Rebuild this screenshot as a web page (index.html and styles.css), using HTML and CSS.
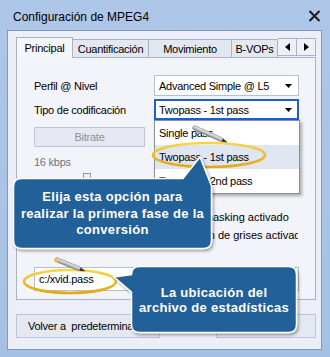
FILE: index.html
```html
<!DOCTYPE html>
<html lang="es">
<head>
<meta charset="utf-8">
<title>Configuración de MPEG4</title>
<link rel="stylesheet" href="styles.css">
</head>
<body>
<div class="window">
  <div class="titlebar">
    <span class="title">Configuración de MPEG4</span>
    <svg class="close" width="13" height="12" viewBox="0 0 13 12"><path d="M1.5 1L11.5 11M11.5 1L1.5 11" stroke="#1b1b1b" stroke-width="2"/></svg>
  </div>
  <div class="client">
    <div class="tabs">
      <div class="tab active">Principal</div>
      <div class="tab t-cuant">Cuantificación</div>
      <div class="tab t-mov">Movimiento</div>
      <div class="tab t-bvop">B-VOPs</div>
      <div class="scroll-btn"><svg width="5" height="8" viewBox="0 0 5 8"><path d="M5 0V8L0 4Z" fill="#000"/></svg></div>
      <div class="scroll-btn"><svg width="5" height="8" viewBox="0 0 5 8"><path d="M0 0V8L5 4Z" fill="#000"/></svg></div>
    </div>
    <div class="page">
      <div class="field-row">
        <span class="label">Perfil @ Nivel</span>
        <div class="combo"><span>Advanced Simple @ L5</span><svg class="arrow" width="7" height="4" viewBox="0 0 7 4"><path d="M0 0H7L3.5 4Z" fill="#000"/></svg></div>
      </div>
      <div class="field-row second">
        <span class="label">Tipo de codificación</span>
        <div class="combo focused"><span>Twopass - 1st pass</span><svg class="arrow" width="7" height="4" viewBox="0 0 7 4"><path d="M0 0H7L3.5 4Z" fill="#000"/></svg>
          <ul class="dropdown">
            <li>Single pass</li>
            <li class="selected">Twopass - 1st pass</li>
            <li>Twopass - 2nd pass</li>
          </ul>
        </div>
      </div>
      <div class="btn disabled bitrate">Bitrate</div>
      <div class="kbps">16 kbps</div>
      <div class="slider"><span class="thumb"></span></div>
      <div class="checks">
        <div class="check"><span class="box"></span><span>Lumimasking activado</span></div>
        <div class="check"><span class="box"></span><span>Opción de grises activado</span></div>
      </div>
      <div class="textbox">c:/xvid.pass</div>
    </div>
    <div class="buttons">
      <div class="btn reset">Volver a&nbsp; predeterminado</div>
      <div class="btn ok">Aceptar</div>
    </div>
  </div>

  <svg class="annotations" width="330" height="357" viewBox="0 0 330 357">
    <defs>
      <linearGradient id="gold" x1="0" y1="0" x2="0" y2="1">
        <stop offset="0" stop-color="#f8d44a"/>
        <stop offset="1" stop-color="#e2a90c"/>
      </linearGradient>
      <linearGradient id="pen" x1="0" y1="0" x2="0" y2="1">
        <stop offset="0" stop-color="#f4f4f4"/>
        <stop offset="0.5" stop-color="#c9c9c9"/>
        <stop offset="1" stop-color="#8d8d8d"/>
      </linearGradient>
      <filter id="shadow" x="-10%" y="-10%" width="125%" height="130%">
        <feDropShadow dx="1.5" dy="2" stdDeviation="1.5" flood-color="#000" flood-opacity="0.35"/>
      </filter>
    </defs>
    <ellipse cx="209" cy="155" rx="56" ry="12" fill="none" stroke="url(#gold)" stroke-width="2.6"/>
    <g transform="translate(193 127) rotate(24)">
      <rect x="0" y="-2" width="32" height="4" rx="1.5" fill="url(#pen)" stroke="#7a7a7a" stroke-width="0.6"/>
      <path d="M32 -2L38 0L32 2Z" fill="#3a3a3a"/>
    </g>
    <ellipse cx="70" cy="281.5" rx="46" ry="11.5" fill="none" stroke="url(#gold)" stroke-width="2.6"/>
    <g transform="translate(55 259) rotate(22)">
      <rect x="0" y="-2" width="27" height="4" rx="1.5" fill="url(#pen)" stroke="#7a7a7a" stroke-width="0.6"/>
      <rect x="0" y="-2" width="4" height="4" fill="#e8c44a"/>
      <path d="M27 -2L33 0L27 2Z" fill="#3a3a3a"/>
    </g>
    <path filter="url(#shadow)" d="M21.5 178.5H183L200 157L211.5 186V240.5Q211.5 248.5 203.5 248.5H21.5Q13.5 248.5 13.5 240.5V186.5Q13.5 178.5 21.5 178.5Z" fill="#23609a" stroke="#fff" stroke-width="1.5"/>
    <path filter="url(#shadow)" d="M139.5 266.5H288.5Q296.5 266.5 296.5 274.5V324.5Q296.5 332.5 288.5 332.5H139.5Q131.5 332.5 131.5 324.5V292L114 277L131.5 274.5Q131.5 266.5 139.5 266.5Z" fill="#23609a" stroke="#fff" stroke-width="1.5"/>
  </svg>

  <div class="callout-text c1">Elija esta opción para<br>realizar la primera fase de la<br>conversión</div>
  <div class="callout-text c2">La ubicación del<br>archivo de estadísticas</div>
</div>
</body>
</html>
```

FILE: styles.css
```css
html, body {
  margin: 0;
  padding: 0;
}
body {
  font-family: "Liberation Sans", Arial, sans-serif;
  font-size: 11px;
  letter-spacing: -0.25px;
  color: #000;
  background: #a9c3e6;
}
.window {
  position: relative;
  width: 330px;
  height: 357px;
  background: linear-gradient(#aec7e8, #a6c0e4);
  overflow: hidden;
}
.titlebar {
  height: 30px;
  box-sizing: border-box;
  padding: 3px 9px 0 13px;
  display: flex;
  align-items: center;
  justify-content: space-between;
}
.title {
  font-size: 12px;
  letter-spacing: 0;
}
.close {
  display: block;
  margin-top: -1px;
}
.client {
  margin: 0 8px 0 7px;
  height: 320px;
  box-sizing: border-box;
  border: 1px solid #7d99c6;
  background: #eceff7;
  padding: 6px 5px 0 8px;
}
.tabs {
  display: flex;
  align-items: flex-end;
  height: 20px;
}
.tab {
  box-sizing: border-box;
  height: 18px;
  border: 1px solid #a9b3c5;
  border-left: none;
  border-bottom: none;
  background: #e3e7ef;
  display: flex;
  align-items: center;
  justify-content: center;
  padding-top: 1px;
}
.tab.active {
  position: relative;
  z-index: 1;
  width: 57px;
  height: 21px;
  margin-bottom: -1px;
  border-left: 1px solid #a9b3c5;
  background: #f5f6fa;
  padding-bottom: 2px;
}
.t-cuant { width: 76px; }
.t-mov { width: 83px; }
.t-bvop { width: 46px; }
.scroll-btn {
  box-sizing: border-box;
  width: 19px;
  height: 18px;
  margin-bottom: 1px;
  border: 1px solid #a9b3c5;
  border-left: none;
  background: #eef0f6;
  display: flex;
  align-items: center;
  justify-content: center;
}
.scroll-btn:first-of-type { border-left: 1px solid #a9b3c5; }
.page {
  box-sizing: border-box;
  width: 300px;
  height: 243px;
  border: 1px solid #a9b3c5;
  background: #f2f4f9;
  padding: 17px 16px 0 17px;
}
.field-row {
  display: flex;
  align-items: center;
  justify-content: space-between;
  height: 21px;
}
.field-row.second { margin-top: 3px; }
.combo {
  position: relative;
  box-sizing: border-box;
  width: 145px;
  height: 21px;
  border: 1px solid #b5bfcf;
  background: #fff;
  display: flex;
  align-items: center;
  justify-content: space-between;
  padding: 0 6px 0 4px;
}
.combo.focused {
  border: 2px solid #1c5ed6;
  padding: 0 5px 0 3px;
}
.arrow { display: block; }
.dropdown {
  position: absolute;
  left: -2px;
  top: 100%;
  margin: 2px 0 0;
  padding: 0;
  list-style: none;
  width: 146px;
  box-sizing: border-box;
  border: 1px solid #8a8f98;
  background: #fff;
  box-shadow: 2px 2px 3px rgba(0, 0, 0, 0.3);
  z-index: 2;
}
.dropdown li {
  height: 24px;
  line-height: 24px;
  padding-left: 4px;
}
.dropdown li.selected { background: #dfe5f1; }
.btn {
  box-sizing: border-box;
  height: 24px;
  border: 1px solid #bcc5d4;
  background: #e4e8f1;
  display: flex;
  align-items: center;
}
.bitrate {
  width: 111px;
  height: 20px;
  margin-top: 7px;
  justify-content: center;
  color: #8a919c;
  background: #e6e9f1;
}
.kbps {
  margin-top: 8px;
  line-height: 14px;
  color: #6c7584;
}
.slider {
  margin-top: 4px;
  height: 10px;
  padding-left: 49px;
}
.thumb {
  display: block;
  width: 6px;
  height: 9px;
  border: 1px solid #8e9aab;
  background: #eef0f5;
}
.checks {
  margin: 27px 0 0 128px;
  width: 136px;
  overflow: hidden;
  white-space: nowrap;
  display: flex;
  flex-direction: column;
  gap: 4px;
  letter-spacing: 0;
}
.check {
  display: flex;
  align-items: center;
  gap: 5px;
  line-height: 14px;
}
.check .box {
  flex: none;
  width: 11px;
  height: 11px;
  border: 1px solid #8e9aab;
  background: #fff;
}
.textbox {
  margin-top: 25px;
  box-sizing: border-box;
  height: 24px;
  border: 1px solid #b5bfcf;
  background: #fff;
  display: flex;
  align-items: center;
  padding-left: 4px;
}
.buttons {
  margin-top: 14px;
  width: 300px;
  display: flex;
  justify-content: space-between;
}
.reset {
  width: 144px;
  padding-left: 11px;
}
.ok {
  width: 100px;
  justify-content: center;
}
.annotations {
  position: absolute;
  left: 0;
  top: 0;
  z-index: 5;
}
.callout-text {
  position: absolute;
  z-index: 6;
  display: flex;
  align-items: center;
  justify-content: center;
  text-align: center;
  color: #fff;
  font-weight: bold;
  font-size: 13px;
  letter-spacing: 0.3px;
}
.c1 {
  left: 13px;
  top: 179px;
  width: 199px;
  height: 70px;
  line-height: 16.5px;
}
.c2 {
  left: 131px;
  top: 267px;
  width: 166px;
  height: 66px;
  line-height: 15.5px;
}
```
